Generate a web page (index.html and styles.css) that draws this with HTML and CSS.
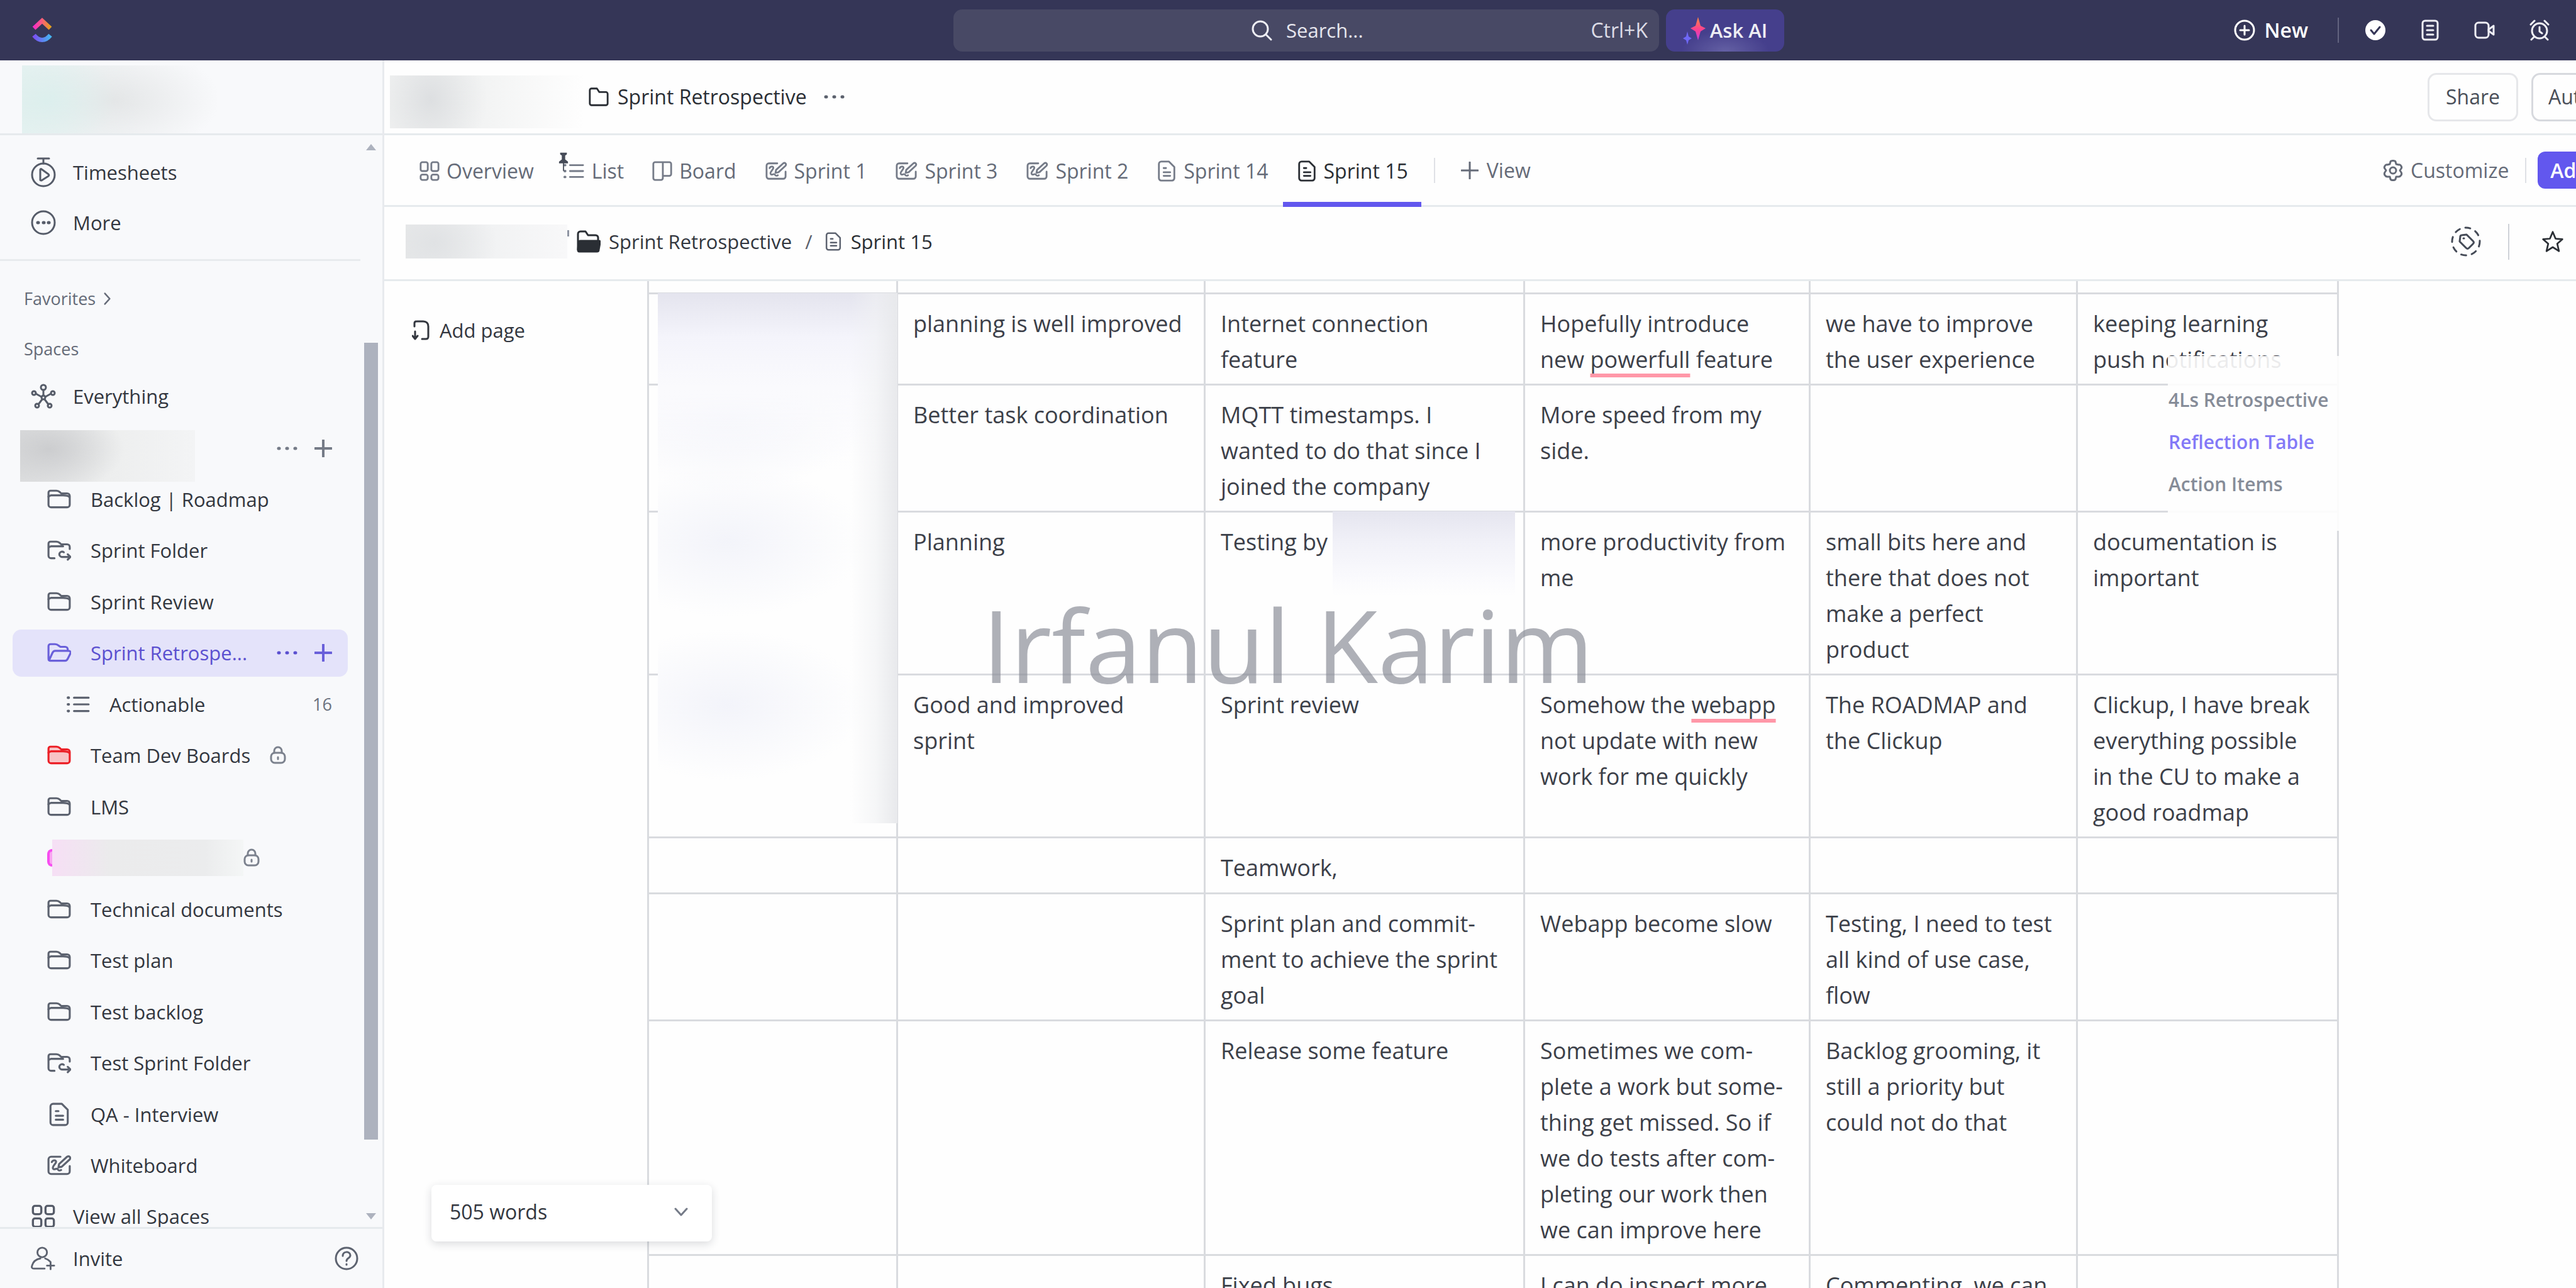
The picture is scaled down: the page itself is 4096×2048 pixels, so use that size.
FILE: index.html
```html
<!DOCTYPE html>
<html lang="en">
<head>
<meta charset="utf-8">
<title>Sprint Retrospective</title>
<link rel="stylesheet" href="styles.css">
</head>
<body>
<svg class="sprite" aria-hidden="true">
  <defs>
    <linearGradient id="warm" x1="0" x2="1"><stop offset="0" stop-color="#f62bc8"/><stop offset=".5" stop-color="#fb5f78"/><stop offset="1" stop-color="#e2a01f"/></linearGradient>
    <linearGradient id="cool" x1="0" x2="1"><stop offset="0" stop-color="#7b4ff2"/><stop offset="1" stop-color="#45b4f0"/></linearGradient>
    <linearGradient id="spark" x1="0" y1="0" x2="0" y2="1"><stop offset="0" stop-color="#fb8a3c"/><stop offset=".55" stop-color="#fb3f93"/><stop offset="1" stop-color="#c63fe0"/></linearGradient>
  </defs>
  <symbol id="folder" viewBox="0 0 36 36"><path d="M2 13V8a3 3 0 0 1 3-3h9c2 0 3 0 5 2l2 2h9a4 4 0 0 1 4 4v13a4 4 0 0 1-4 4H6a4 4 0 0 1-4-4z"/><path d="M2 14c1-1 2-2 4-2h18c4 0 7 0 9 2"/></symbol>
  <symbol id="folder-sprint" viewBox="0 0 36 36"><path d="M11 30H6a4 4 0 0 1-4-4V8a3 3 0 0 1 3-3h9c2 0 3 0 5 2l2 2h9a4 4 0 0 1 4 4v3M2 14c1-1 2-2 4-2h18"/><path d="M35 28H22a4 4 0 1 1 3-7M31 24l4 4-4 4"/></symbol>
  <symbol id="folder-open" viewBox="0 0 36 36"><path d="M2 27V8a3 3 0 0 1 3-3h7c2 0 3 0 5 2l3 2h7a4 4 0 0 1 4 4v2M3 29l5-11c1-2 2-3 4-3h20c3 0 4 2 3 4l-4 8c-1 2-2 3-4 3H5c-2 0-3-1-3-3"/></symbol>
  <symbol id="folder-plain" viewBox="0 0 36 36"><path d="M3 7a3 3 0 0 1 3-3h9l4 6h11a3 3 0 0 1 3 3v16a3 3 0 0 1-3 3H6a3 3 0 0 1-3-3z"/></symbol>
  <symbol id="folder-dark" viewBox="0 0 38 36"><path d="M2 31V6a4 4 0 0 1 4-4h8l4 6h12a4 4 0 0 1 4 4v4"/><path d="M6 17h29c2 0 3 1 2 3l-2 11c0 2-1 3-3 3H4c-2 0-2-1-2-3l1-11c0-2 1-3 3-3z" fill="currentColor"/></symbol>
  <symbol id="list" viewBox="0 0 36 36"><path d="M12 8h22M12 18h22M12 28h22"/><path d="M3 8h1M3 18h1M3 28h1" stroke-width="4"/></symbol>
  <symbol id="doc" viewBox="0 0 36 36"><path d="M5 6a4 4 0 0 1 4-4h13l9 9v19a4 4 0 0 1-4 4H9a4 4 0 0 1-4-4zM13 13h4M13 20h11M13 26h11"/></symbol>
  <symbol id="board" viewBox="0 0 36 36"><path d="M6 3h24a3 3 0 0 1 3 3v17a3 3 0 0 1-3 3H19v4a3 3 0 0 1-3 3H6a3 3 0 0 1-3-3V6a3 3 0 0 1 3-3zM19 3v23"/></symbol>
  <symbol id="whiteboard" viewBox="0 0 36 36"><path d="M20 5H6a4 4 0 0 0-4 4v18a4 4 0 0 0 4 4h24a4 4 0 0 0 4-4v-8"/><path d="M17 21l1-5L30 5c3-2 6 1 4 4L22 20zM7 13c2-4 8-3 6 1s-6 6-4 9 5-2 7 1 3 2 5 1"/></symbol>
  <symbol id="grid" viewBox="0 0 36 36"><rect x="3" y="3" width="12" height="12" rx="3"/><rect x="21" y="3" width="12" height="12" rx="3"/><rect x="3" y="21" width="12" height="12" rx="3"/><rect x="21" y="21" width="12" height="12" rx="3"/></symbol>
  <symbol id="overview" viewBox="0 0 36 36"><rect x="3" y="3" width="12" height="15" rx="3"/><rect x="21" y="3" width="12" height="15" rx="3"/><rect x="3" y="24" width="12" height="9" rx="3"/><rect x="21" y="24" width="12" height="9" rx="3"/></symbol>
  <symbol id="timer" viewBox="0 0 40 50"><circle cx="20" cy="29" r="18"/><path d="M11 3h18M20 3v8M15 21v16c0 1 1 1 2 1l11-7c1-1 1-2 0-3l-11-8c-1-1-2 0-2 1z"/></symbol>
  <symbol id="more" viewBox="0 0 40 40"><circle cx="20" cy="20" r="18"/><path d="M11 20h1M20 20h1M28 20h1" stroke-width="5"/></symbol>
  <symbol id="hub" viewBox="0 0 40 40"><circle cx="20" cy="22" r="3"/><circle cx="20" cy="6" r="4"/><circle cx="5" cy="15" r="3"/><circle cx="35" cy="15" r="3"/><circle cx="10" cy="35" r="3"/><circle cx="30" cy="35" r="3"/><path d="M20 19v-9M17 21l-9-5M23 21l9-5M18 25l-6 8M22 25l6 8"/></symbol>
  <symbol id="lock" viewBox="0 0 26 30"><rect x="2" y="11" width="22" height="16" rx="6"/><path d="M7 11V8a6 6 0 0 1 12 0v3M13 18v3"/></symbol>
  <symbol id="dots" viewBox="0 0 34 34"><path d="M4 17h1M17 17h1M30 17h1" stroke-width="5"/></symbol>
  <symbol id="plus" viewBox="0 0 28 28"><path d="M14 1v26M1 14h26"/></symbol>
  <symbol id="chev-right" viewBox="0 0 16 26"><path d="M3 3l9 10-9 10"/></symbol>
  <symbol id="chev-down" viewBox="0 0 22 16"><path d="M2 3l9 10 9-10"/></symbol>
  <symbol id="invite" viewBox="0 0 42 42"><circle cx="19" cy="11" r="8"/><path d="M23 38H5c-3 0-4-2-3-5 2-7 8-11 14-12M24 21c3 1 6 3 8 5M33 27v12M27 33h12"/></symbol>
  <symbol id="help" viewBox="0 0 40 40"><circle cx="20" cy="20" r="17"/><path d="M14 16c0-8 12-8 12-1 0 5-6 4-6 9M20 29v1"/></symbol>
  <symbol id="search" viewBox="0 0 34 34"><circle cx="15" cy="15" r="12"/><path d="M24 24l8 8"/></symbol>
  <symbol id="new" viewBox="0 0 34 34"><circle cx="17" cy="17" r="15"/><path d="M17 10v14M10 17h14"/></symbol>
  <symbol id="check" viewBox="0 0 34 34"><circle cx="17" cy="17" r="16" fill="#fff" stroke="none"/><path d="M10 17l5 6 9-11" stroke="#353657"/></symbol>
  <symbol id="note" viewBox="0 0 34 34"><rect x="5" y="2" width="24" height="30" rx="4"/><path d="M12 10h10M12 17h10M12 24h10"/></symbol>
  <symbol id="video" viewBox="0 0 34 34"><rect x="2" y="5" width="21" height="24" rx="5"/><path d="M23 16l8-6v14l-8-6"/></symbol>
  <symbol id="alarm" viewBox="0 0 34 34"><circle cx="17" cy="18" r="12"/><path d="M17 12v7l4 3M3 8l6-6M31 8l-6-6M8 28l-4 4M26 28l4 4"/></symbol>
  <symbol id="gear" viewBox="0 0 34 34"><path d="M13 3c1-2 7-2 8 0l1 4 4 1c3-1 6 4 4 6l-2 3 2 3c2 3-1 7-4 7l-4 0-1 4c-1 2-7 2-8 0l-1-4-4 0c-3 0-6-4-4-7l2-3-2-3c-2-2 1-7 4-6l4-1z"/><circle cx="17" cy="17" r="5"/></symbol>
  <symbol id="tag" viewBox="0 0 50 50"><circle cx="25" cy="25" r="22" stroke-dasharray="8 9"/><path d="M16 17c0-1 1-2 2-2l8-1 10 10c2 2 2 3 0 5l-6 6c-2 2-3 2-5 0L15 25zM21 20h1"/></symbol>
  <symbol id="star" viewBox="0 0 40 40"><path d="M20 3l5 12 12 1-9 8 3 13-11-7-11 7 3-13-9-8 12-1z"/></symbol>
  <symbol id="page-add" viewBox="0 0 28 36"><path d="M8 4h10c5 0 8 3 8 8v16c0 3-1 4-4 4h-6M4 12V7c0-2 1-3 3-3M5 20v12M1 27l4 5 4-5"/></symbol>
  <symbol id="pin" viewBox="0 0 18 36"><path d="M3 2h12v3l-3 2v7l5 4v3h-7v13l-2 1V21H1v-3l5-4V7L3 5z" fill="currentColor" stroke="none"/></symbol>
</svg>

<header class="topbar">
  <a class="logo" href="#" aria-label="Home"><svg viewBox="0 0 32 40"><path d="M3 17L16 5l13 12" stroke="url(#warm)"/><path d="M3 28c8 10 18 10 26 0" stroke="url(#cool)"/></svg></a>
  <label class="search"><svg class="icon"><use href="#search"/></svg><input type="text" placeholder="Search..." aria-label="Search"><kbd>Ctrl+K</kbd></label>
  <button class="ask"><svg viewBox="0 0 36 46"><path d="M24 2l4 14 8 4-8 5-4 14-4-14-8-5 8-4z" fill="url(#spark)"/><path d="M7 25l2 8 5 3-5 3-2 7-2-7-5-3 5-3z" fill="#6f68f6"/></svg>Ask AI</button>
  <div class="top-actions">
    <button class="new"><svg class="icon"><use href="#new"/></svg>New</button>
    <button aria-label="Tasks"><svg class="icon"><use href="#check"/></svg></button>
    <button aria-label="Notepad"><svg class="icon"><use href="#note"/></svg></button>
    <button aria-label="Record"><svg class="icon"><use href="#video"/></svg></button>
    <button aria-label="Reminders"><svg class="icon"><use href="#alarm"/></svg></button>
  </div>
</header>

<div class="app">
  <aside class="sidebar">
    <div class="workspace"><span class="redacted redacted-workspace"></span></div>
    <nav class="side-scroll">
      <div class="side-top">
        <a class="row" href="#"><svg class="icon tall"><use href="#timer"/></svg>Timesheets</a>
        <a class="row" href="#"><svg class="icon"><use href="#more"/></svg>More</a>
      </div>
      <a class="section" href="#">Favorites <svg class="chev"><use href="#chev-right"/></svg></a>
      <div class="section">Spaces</div>
      <a class="row everything" href="#"><svg class="icon"><use href="#hub"/></svg>Everything</a>
      <div class="space"><span class="redacted redacted-space"></span><span class="row-tools"><button aria-label="Space options"><svg class="dots"><use href="#dots"/></svg></button><button aria-label="Add to space"><svg class="plus"><use href="#plus"/></svg></button></span></div>
      <ul class="tree">
        <li><a href="#"><svg class="icon"><use href="#folder"/></svg>Backlog | Roadmap</a></li>
        <li><a href="#"><svg class="icon"><use href="#folder-sprint"/></svg>Sprint Folder</a></li>
        <li><a href="#"><svg class="icon"><use href="#folder"/></svg>Sprint Review</a></li>
        <li class="active"><a href="#"><svg class="icon"><use href="#folder-open"/></svg>Sprint Retrospe...</a><span class="row-tools"><button aria-label="Folder options"><svg class="dots"><use href="#dots"/></svg></button><button aria-label="Add to folder"><svg class="plus"><use href="#plus"/></svg></button></span></li>
        <li class="child"><a href="#"><svg class="icon"><use href="#list"/></svg>Actionable</a><span class="count">16</span></li>
        <li class="team"><a href="#"><svg class="icon"><use href="#folder"/></svg>Team Dev Boards<svg class="lock"><use href="#lock"/></svg></a></li>
        <li><a href="#"><svg class="icon"><use href="#folder"/></svg>LMS</a></li>
        <li class="private"><a href="#" aria-label="Private folder"><span class="sliver"></span><span class="redacted redacted-folder"></span><svg class="lock"><use href="#lock"/></svg></a></li>
        <li><a href="#"><svg class="icon"><use href="#folder"/></svg>Technical documents</a></li>
        <li><a href="#"><svg class="icon"><use href="#folder"/></svg>Test plan</a></li>
        <li><a href="#"><svg class="icon"><use href="#folder"/></svg>Test backlog</a></li>
        <li><a href="#"><svg class="icon"><use href="#folder-sprint"/></svg>Test Sprint Folder</a></li>
        <li><a href="#"><svg class="icon"><use href="#doc"/></svg>QA - Interview</a></li>
        <li><a href="#"><svg class="icon"><use href="#whiteboard"/></svg>Whiteboard</a></li>
      </ul>
      <div class="all-spaces"><a class="row" href="#"><svg class="icon"><use href="#grid"/></svg>View all Spaces</a></div>
      <div class="scrollbar" aria-hidden="true"><i class="arrow up"></i><i class="thumb"></i><i class="arrow down"></i></div>
    </nav>
    <div class="side-foot">
      <a class="row" href="#"><svg class="icon"><use href="#invite"/></svg>Invite</a>
      <button aria-label="Help"><svg class="icon"><use href="#help"/></svg></button>
    </div>
  </aside>

  <main class="main">
    <div class="titlebar">
      <span class="redacted redacted-title"></span>
      <h1><svg class="icon"><use href="#folder-plain"/></svg>Sprint Retrospective</h1>
      <button class="bare" aria-label="More options"><svg class="dots"><use href="#dots"/></svg></button>
      <div class="title-actions"><button class="outline">Share</button><button class="outline cut">Automate</button></div>
    </div>

    <div class="tabbar">
      <nav class="tabs">
        <a href="#"><svg class="icon"><use href="#overview"/></svg>Overview</a>
        <a href="#"><svg class="pin"><use href="#pin"/></svg><svg class="icon wide"><use href="#list"/></svg>List</a>
        <a href="#"><svg class="icon"><use href="#board"/></svg>Board</a>
        <a href="#"><svg class="icon wide"><use href="#whiteboard"/></svg>Sprint 1</a>
        <a href="#"><svg class="icon wide"><use href="#whiteboard"/></svg>Sprint 3</a>
        <a href="#"><svg class="icon wide"><use href="#whiteboard"/></svg>Sprint 2</a>
        <a href="#"><svg class="icon"><use href="#doc"/></svg>Sprint 14</a>
        <a href="#" class="current"><svg class="icon"><use href="#doc"/></svg>Sprint 15</a>
      </nav>
      <button class="add-view"><svg class="plus"><use href="#plus"/></svg>View</button>
      <div class="tab-actions"><button class="customize"><svg class="icon"><use href="#gear"/></svg>Customize</button><button class="primary">Add Task</button></div>
    </div>

    <div class="crumbs">
      <span class="redacted redacted-crumb"></span><i class="tick"></i>
      <a href="#"><svg class="icon"><use href="#folder-dark"/></svg>Sprint Retrospective</a>
      <span class="slash">/</span>
      <a href="#" class="here"><svg class="icon small"><use href="#doc"/></svg>Sprint 15</a>
      <div class="crumb-actions"><button aria-label="Tags"><svg class="tag"><use href="#tag"/></svg></button><button class="fav" aria-label="Favorite"><svg class="icon"><use href="#star"/></svg></button></div>
    </div>

    <div class="doc">
      <div class="pages"><button><svg><use href="#page-add"/></svg>Add page</button></div>
      <div class="sheet">
        <table>
          <colgroup><col class="c1"><col class="c2"><col class="c3"><col class="c4"><col class="c5"><col class="c6"></colgroup>
          <tbody>
            <tr class="stub"><td></td><td></td><td></td><td></td><td></td><td></td></tr>
            <tr><td class="names"><span class="name-veil"></span></td><td>planning is well improved</td><td>Internet connection<br>feature</td><td>Hopefully introduce<br>new <u>powerfull</u> feature</td><td>we have to improve<br>the user experience</td><td>keeping learning<br>push notifications</td></tr>
            <tr><td></td><td>Better task coordination</td><td>MQTT timestamps. I<br>wanted to do that since I<br>joined the company</td><td>More speed from my<br>side.</td><td></td><td></td></tr>
            <tr><td></td><td>Planning</td><td class="names">Testing by<span class="tester-veil"></span></td><td>more productivity from<br>me</td><td>small bits here and<br>there that does not<br>make a perfect<br>product</td><td>documentation is<br>important</td></tr>
            <tr><td></td><td>Good and improved<br>sprint</td><td>Sprint review</td><td>Somehow the <u>webapp</u><br>not update with new<br>work for me quickly</td><td>The ROADMAP and<br>the Clickup</td><td>Clickup, I have break<br>everything possible<br>in the CU to make a<br>good roadmap</td></tr>
            <tr><td></td><td></td><td>Teamwork,</td><td></td><td></td><td></td></tr>
            <tr><td></td><td></td><td>Sprint plan and commit-<br>ment to achieve the sprint<br>goal</td><td>Webapp become slow</td><td>Testing, I need to test<br>all kind of use case,<br>flow</td><td></td></tr>
            <tr><td></td><td></td><td>Release some feature</td><td>Sometimes we com-<br>plete a work but some-<br>thing get missed. So if<br>we do tests after com-<br>pleting our work then<br>we can improve here</td><td>Backlog grooming, it<br>still a priority but<br>could not do that</td><td></td></tr>
            <tr><td></td><td></td><td>Fixed bugs</td><td>I can do inspect more</td><td>Commenting, we can</td><td></td></tr>
          </tbody>
        </table>
        <nav class="outline-nav"><a href="#">4Ls Retrospective</a><a href="#" class="current">Reflection Table</a><a href="#">Action Items</a></nav>
      </div>
      <button class="words">505 words<svg><use href="#chev-down"/></svg></button>
    </div>
  </main>
</div>
<div class="watermark">Irfanul Karim</div>
</body>
</html>
```
FILE: styles.css
```css
* { box-sizing: border-box; }
html, body { height: 100%; }
body {
  margin: 0;
  display: flex;
  flex-direction: column;
  overflow: hidden;
  background: #fefefe;
  color: #33373f;
  font: 400 31px/40px "Open Sans", "Noto Sans", sans-serif;
}
a { color: inherit; text-decoration: none; }
button { margin: 0; padding: 0; border: 0; background: none; color: inherit; font: inherit; display: flex; align-items: center; flex: none; white-space: nowrap; }
ul { margin: 0; padding: 0; list-style: none; }
svg { fill: none; stroke: currentColor; stroke-width: 3; stroke-linecap: round; stroke-linejoin: round; flex: none; display: block; }
.sprite { position: absolute; width: 0; height: 0; }
.redacted { display: block; flex: none; }

/* Top bar */
.topbar {
  flex: none;
  height: 96px;
  display: grid;
  grid-template-columns: 1505fr 1122px 188px 1248fr;
  column-gap: 11px;
  align-items: center;
  background: #353657;
  color: #eeeef4;
}
.logo { padding-left: 51px; }
.logo svg { width: 32px; height: 42px; stroke-width: 7; stroke-linecap: butt; stroke-linejoin: miter; }
.search {
  height: 67px;
  display: flex;
  align-items: center;
  gap: 22px;
  padding: 0 18px 0 473px;
  border-radius: 14px;
  background: #484965;
}
.search .icon { width: 34px; height: 34px; }
.search input { flex: 1; min-width: 0; padding: 0; border: 0; outline: 0; background: none; color: inherit; font: inherit; }
.search input::placeholder { color: #e6e6ee; opacity: 1; }
.search kbd { font: inherit; font-size: 32px; color: #dcdce6; }
.ask {
  height: 67px;
  justify-content: center;
  gap: 7px;
  border-radius: 14px;
  background: radial-gradient(ellipse 70px 34px at 50% 100%, #6460a4, transparent), #453f8c;
  font-weight: 600;
}
.ask svg { width: 36px; height: 46px; stroke: none; }
.top-actions { display: flex; align-items: center; justify-content: flex-end; gap: 53px; padding-right: 41px; }
.top-actions .icon { width: 34px; height: 34px; }
.new { gap: 14px; padding-right: 47px; margin-right: -12px; border-right: 2px solid #62637f; font-weight: 600; font-size: 32px; color: #fff; }

/* Frame */
.app { flex: 1; min-height: 0; display: flex; }
.sidebar { flex: none; width: 611px; display: flex; flex-direction: column; background: #f8f9fb; border-right: 3px solid #e8eaee; }
.workspace { flex: none; height: 119px; padding: 8px 0 0 35px; border-bottom: 3px solid #e6eaed; }
.redacted-workspace {
  width: 310px;
  height: 108px;
  background: radial-gradient(ellipse 110px 80px at 40px 55px, #dcefed, transparent), radial-gradient(ellipse 170px 90px at 145px 55px, #e4e6e7, transparent), linear-gradient(90deg, #e6f2f1, #f8f9fb 60%);
}

/* Sidebar */
.side-scroll { position: relative; flex: 1; min-height: 0; display: flex; flex-direction: column; overflow: hidden; }
.row { display: flex; align-items: center; gap: 27px; height: 80px; padding-left: 49px; }
.row .icon { width: 40px; height: 40px; color: #565c69; }
.row .tall { height: 50px; }
.side-top { flex: none; width: 573px; padding: 19px 0 18px; border-bottom: 3px solid #e8ebee; }
.section { flex: none; height: 80px; padding-left: 38px; display: flex; align-items: center; gap: 12px; color: #656b78; font-size: 27px; font-weight: 500; }
.side-top + .section { margin-top: 20px; }
.chev { width: 14px; height: 22px; }
.everything { flex: none; height: 70px; }
.space { flex: none; height: 88px; padding: 8px 80px 0 32px; display: flex; align-items: center; justify-content: space-between; color: #757b87; }
.redacted-space { width: 278px; height: 82px; align-self: flex-end; margin-bottom: -13px; background: radial-gradient(ellipse 120px 70px at 45px 30px, #cccdcf, transparent), linear-gradient(90deg, #dfe0e1, #edeeee 50%, #f3f4f5); }
.row-tools { display: flex; align-items: center; gap: 27px; }
.dots { width: 34px; height: 34px; }
.plus { width: 28px; height: 28px; stroke-width: 4; }
.tree { flex: 1; display: flex; flex-direction: column; }
.tree li { flex: 1; display: flex; align-items: center; justify-content: space-between; margin: 0 80px 0 20px; padding-left: 55px; }
.tree a { display: flex; align-items: center; gap: 31px; white-space: nowrap; }
.tree .icon { width: 38px; height: 38px; color: #5d6370; }
.tree .active { position: relative; z-index: 0; color: #5b50d0; font-weight: 500; }
.tree .active::before { content: ""; position: absolute; z-index: -1; inset: 3px -25px 3px 0; border-radius: 14px; background: #e4e3fa; }
.tree .active .icon, .tree .active .plus { color: #6a60da; }
.tree .child { padding-left: 85px; }
.count { color: #6c7280; font-size: 27px; }
.tree .team .icon { color: #ec2027; fill: #f8c4c6; }
.lock { width: 26px; height: 30px; color: #7c828e; }
.tree .private a { gap: 0; }
.sliver { width: 8px; height: 28px; border: 4px solid #f74df0; border-right: 0; border-radius: 8px 0 0 8px; background: #f9a4f2; }
.redacted-folder { width: 304px; height: 58px; background: linear-gradient(90deg, #f6dff5, #ebebec 30%, #ebeced 80%, #f4f6f6); }
.all-spaces { flex: none; height: 57px; }
.scrollbar { position: absolute; top: 0; right: 7px; bottom: 0; width: 22px; }
.scrollbar i { position: absolute; }
.thumb { left: 0; right: 0; top: 19%; bottom: 8%; background: #adb2be; }
.arrow { left: 3px; border: 8px solid transparent; }
.up { top: 6px; border-bottom: 10px solid #adb2be; }
.down { bottom: 4px; border-top: 10px solid #adb2be; }
.side-foot { flex: none; height: 97px; display: flex; align-items: center; justify-content: space-between; padding-right: 37px; border-top: 3px solid #e6eaed; color: #33373f; }
.side-foot .icon { width: 40px; height: 40px; color: #5d6370; }

/* Header rows */
.main { flex: 1; min-width: 0; display: flex; flex-direction: column; overflow: hidden; }
.titlebar, .tabbar, .crumbs { flex: none; display: flex; align-items: center; border-bottom: 3px solid #e6eaed; }
.titlebar { height: 119px; padding-left: 9px; font-size: 32px; }
.redacted-title { width: 308px; height: 84px; margin-top: 16px; background: radial-gradient(ellipse 90px 110px at 65px 38px, #dddfe1, transparent), linear-gradient(90deg, #f1f2f2, #f3f4f4 50%, #fefefe); }
h1 { margin: 0 0 0 6px; display: flex; align-items: center; gap: 12px; font-size: 32px; line-height: 40px; font-weight: 500; color: #2a2e34; }
h1 .icon { width: 36px; height: 34px; }
.bare { margin-left: 26px; color: #5b616d; }
.title-actions { margin-left: auto; display: flex; gap: 21px; overflow: hidden; width: 236px; }
.outline { height: 77px; padding: 0 26px; border: 3px solid #e6e7ea; border-radius: 14px; font-weight: 500; color: #4a4f59; }
.cut { border-color: #d7d9de; padding: 0 24px; }

.tabbar { height: 114px; color: #656b78; font-size: 32px; }
.tabs { align-self: stretch; display: flex; gap: 2px; padding-left: 34px; margin-bottom: -3px; }
.tabs a { position: relative; display: flex; align-items: center; gap: 10px; padding: 0 21px; white-space: nowrap; font-weight: 500; }
.tabs .icon { width: 34px; height: 34px; color: #757b88; }
.tabs .wide { width: 38px; }
.tabs .current { color: #2a2e34; border-bottom: 8px solid #6257ee; padding-top: 8px; }
.tabs .current .icon { color: #2a2e34; }
.pin { position: absolute; left: 15px; top: 26px; width: 18px; height: 32px; color: #454b57; }
.add-view { height: 40px; gap: 13px; margin-left: 20px; padding-left: 41px; border-left: 2px solid #dfe1e6; font-weight: 500; }
.add-view .plus { stroke-width: 3; }
.tab-actions { margin-left: auto; width: 308px; display: flex; align-items: center; gap: 18px; overflow: hidden; }
.customize { gap: 11px; height: 40px; padding-right: 26px; border-right: 2px solid #dfe1e6; }
.customize .icon { width: 34px; height: 34px; }
.primary { height: 59px; padding: 0 20px; border-radius: 12px; background: #6257ee; color: #fff; font-weight: 600; }

.crumbs { height: 118px; padding: 0 0 5px 34px; }
.redacted-crumb { width: 257px; height: 54px; background: radial-gradient(ellipse 100px 80px at 45px 30px, #e0e2e4, transparent), linear-gradient(90deg, #e9eaeb, #f1f2f3 50%, #f8f8f9); }
.tick { width: 3px; height: 10px; margin: 0 12px 26px 0; background: #8f95a3; }
.crumbs a { display: flex; align-items: center; gap: 13px; white-space: nowrap; }
.crumbs .icon { width: 38px; height: 36px; color: #2a2e34; }
.crumbs .small { width: 30px; height: 34px; color: #5d6370; }
.slash { margin: 0 18px 0 21px; color: #5b616d; }
.here { font-weight: 500; color: #2a2e34; }
.crumb-actions { margin-left: auto; display: flex; align-items: center; gap: 42px; padding-right: 18px; color: #454b57; }
.tag { width: 50px; height: 50px; }
.fav { height: 57px; padding-left: 50px; border-left: 2px solid #cfd2d8; }

/* Document */
.doc { position: relative; flex: 1; min-height: 0; display: grid; grid-template-columns: 418px 1fr; padding-right: 377px; overflow: hidden; }
.pages { padding: 58px 0 0 44px; font-weight: 500; }
.pages button { gap: 16px; }
.pages svg { width: 28px; height: 36px; }
.sheet { position: relative; }
table { width: 100%; table-layout: fixed; border-collapse: collapse; font-size: 36px; line-height: 57px; color: #3c4049; }
.c1 { width: 396px; }
.c2 { width: 489px; }
.c3 { width: 508px; }
.c4 { width: 454px; }
.c5 { width: 425px; }
.c6 { width: 415px; }
td { height: 89px; padding: 18px 0 10px 24px; border: 3px solid #d9dbdf; vertical-align: top; white-space: nowrap; }
.stub td { height: 19px; padding: 0; border-top: 0; }
u { text-decoration: underline 6px #ff97a8; text-underline-offset: 9px; text-decoration-skip-ink: none; }
.names { position: relative; }
.name-veil {
  position: absolute;
  z-index: 1;
  top: -2px;
  left: 14px;
  right: -2px;
  height: 843px;
  background:
    linear-gradient(270deg, #e8e9ec, rgba(240, 241, 243, .6) 35px, transparent 75px),
    linear-gradient(#e4e4ee, #f4f4fb 70px, #fafafd 150px, transparent 280px),
    radial-gradient(ellipse 220px 120px at 110px 195px, #f3f4fa, transparent),
    radial-gradient(ellipse 220px 120px at 110px 395px, #f3f4fa, transparent),
    radial-gradient(ellipse 220px 120px at 110px 655px, #f3f4fa, transparent),
    #fefefe;
}
.tester-veil { position: absolute; top: -2px; left: 202px; right: 13px; height: 136px; background: linear-gradient(#e5e5ef, #f1f1f8 50px, #fafafd 105px, #fefefe); }
.outline-nav { position: absolute; top: 119px; right: 0; width: 272px; height: 278px; padding: 36px 0 0 1px; display: flex; flex-direction: column; background: rgba(254, 254, 254, .9); color: #868c98; font-size: 30px; line-height: 67px; font-weight: 600; white-space: nowrap; }
.outline-nav .current { color: #8379f7; }
.words { position: absolute; left: 75px; bottom: 74px; width: 446px; height: 90px; padding: 0 38px 4px 29px; justify-content: space-between; border-radius: 8px; background: #fff; box-shadow: 0 4px 14px rgba(30, 35, 50, .16); font-size: 32px; }
.words svg { width: 22px; height: 16px; color: #757b88; }
.watermark { position: absolute; inset: 0; display: flex; align-items: center; justify-content: center; color: rgba(136, 139, 149, .68); font-size: 160px; pointer-events: none; }
```
